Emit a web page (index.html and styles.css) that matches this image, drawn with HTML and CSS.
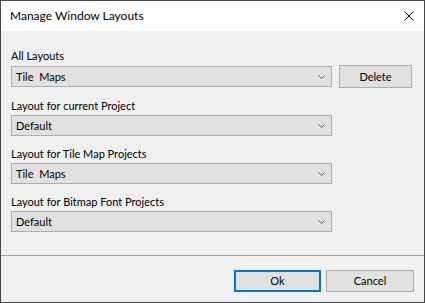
FILE: index.html
```html
<!DOCTYPE html>
<html lang="en-us">
<head>
  <meta charset="utf-8">
  <title>Manage Window Layouts</title>
  <link rel="stylesheet" href="styles.css">
</head>
<body>

  <div class="dialog">
    <div class="titlebar">
      <span class="title">Manage Window Layouts</span>
      <svg class="close" width="10" height="10" viewBox="0 0 10 10">
        <path d="M0.5 0.5L9.5 9.5M9.5 0.5L0.5 9.5" stroke="#000" stroke-width="1" fill="none"/>
      </svg>
    </div>

    <div class="content">
      <div class="group">
        <label>All Layouts</label>
        <div class="row">
          <div class="combo"><span>Tile&nbsp; Maps</span><svg class="chevron" width="7" height="4" viewBox="0 0 7 4"><path d="M0.5 0.5L3.5 3.5L6.5 0.5" stroke="#606060" fill="none"/></svg></div>
          <div class="button delete">Delete</div>
        </div>
      </div>
      <div class="group">
        <label>Layout for current Project</label>
        <div class="row">
          <div class="combo"><span>Default</span><svg class="chevron" width="7" height="4" viewBox="0 0 7 4"><path d="M0.5 0.5L3.5 3.5L6.5 0.5" stroke="#606060" fill="none"/></svg></div>
        </div>
      </div>
      <div class="group">
        <label>Layout for Tile Map Projects</label>
        <div class="row">
          <div class="combo"><span>Tile&nbsp; Maps</span><svg class="chevron" width="7" height="4" viewBox="0 0 7 4"><path d="M0.5 0.5L3.5 3.5L6.5 0.5" stroke="#606060" fill="none"/></svg></div>
        </div>
      </div>
      <div class="group">
        <label>Layout for Bitmap Font Projects</label>
        <div class="row">
          <div class="combo"><span>Default</span><svg class="chevron" width="7" height="4" viewBox="0 0 7 4"><path d="M0.5 0.5L3.5 3.5L6.5 0.5" stroke="#606060" fill="none"/></svg></div>
        </div>
      </div>
    </div>

    <div class="footer">
      <div class="button ok">Ok</div>
      <div class="button cancel">Cancel</div>
    </div>
  </div>

</body>
</html>
```

FILE: styles.css
```css
* {
  box-sizing: border-box;
}
body {
  margin: 0;
  font: 11px/16px Lato, "Noto Sans", sans-serif;
  color: #000;
}
.dialog {
  width: 425px;
  height: 303px;
  border: 1px solid #474747;
  background-color: #f0f0f0;
  display: flex;
  flex-direction: column;
}
.titlebar {
  height: 30px;
  background-color: #fff;
  display: flex;
  align-items: center;
  justify-content: space-between;
  padding: 0 10px 0 9px;
}
.title {
  font-size: 12px;
}
.close {
  display: block;
}
.content {
  flex: 1;
  padding: 17px 12px 0 10px;
  display: flex;
  flex-direction: column;
  gap: 10px;
}
.group label {
  display: block;
  height: 16px;
  margin-bottom: 1px;
}
.row {
  display: flex;
  align-items: center;
  gap: 7px;
}
.combo {
  width: 321px;
  height: 21px;
  border: 1px solid #adadad;
  background-color: #e1e1e1;
  display: flex;
  align-items: center;
  justify-content: space-between;
  padding: 0 6px 0 4px;
}
.button {
  height: 22px;
  border: 1px solid #adadad;
  background-color: #e1e1e1;
  display: flex;
  align-items: center;
  justify-content: center;
}
.delete {
  width: 73px;
  height: 23px;
}
.footer {
  height: 47px;
  border-top: 1px solid #a0a0a0;
  display: flex;
  justify-content: flex-end;
  gap: 5px;
  padding: 14px 10px 0 0;
}
.ok {
  width: 87px;
  border: 2px solid #0078d7;
}
.cancel {
  width: 88px;
}
```
